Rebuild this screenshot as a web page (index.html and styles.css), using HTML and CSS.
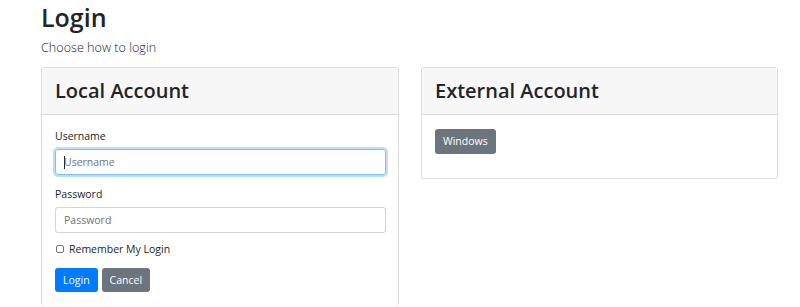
FILE: index.html
```html
<!DOCTYPE html>
<html lang="en">
<head>
<meta charset="utf-8">
<title>Login</title>
<link rel="stylesheet" href="styles.css">
</head>
<body>
<div class="page">
  <div class="lead">
    <h1 class="title">Login</h1>
    <p class="subtitle">Choose how to login</p>
  </div>
  <div class="row">
    <div class="card card-local">
      <div class="card-header"><h2 class="card-title">Local Account</h2></div>
      <div class="card-body">
        <div class="form-group">
          <label class="label" for="u">Username</label>
          <div class="input input-focus"><span class="caret"></span><span class="placeholder">Username</span></div>
        </div>
        <div class="form-group">
          <label class="label" for="p">Password</label>
          <div class="input"><span class="placeholder">Password</span></div>
        </div>
        <div class="check-row">
          <span class="checkbox"></span>
          <span class="check-label">Remember My Login</span>
        </div>
        <div class="buttons">
          <button class="btn btn-primary">Login</button>
          <button class="btn btn-secondary">Cancel</button>
        </div>
      </div>
    </div>
    <div class="card card-external">
      <div class="card-header"><h2 class="card-title">External Account</h2></div>
      <div class="card-body">
        <div class="list-inline">
          <button class="btn btn-secondary">Windows</button>
        </div>
      </div>
    </div>
  </div>
</div>
</body>
</html>
```
FILE: styles.css
```css
html, body {
  margin: 0;
  padding: 0;
  background: #fff;
  color: #212529;
  font-family: "Open Sans", "Noto Sans", sans-serif;
}
.page {
  padding: 0 22px 0 41px;
}
.lead {
  display: flex;
  flex-direction: column;
}
.title {
  margin: 0;
  font-size: 25px;
  font-weight: 600;
  line-height: 34px;
  height: 34px;
}
.subtitle {
  margin: 4px 0 0 0;
  font-size: 12.6px;
  font-weight: 300;
  line-height: 19px;
  color: #212529;
}
.row {
  display: flex;
  gap: 22px;
  margin-top: 10px;
  align-items: flex-start;
}
.card {
  border: 1px solid rgba(0,0,0,.125);
  border-radius: 3px;
  box-sizing: border-box;
  background: #fff;
}
.card-local {
  width: 358px;
  border-bottom: none;
}
.card-external {
  width: 357px;
}
.card-header {
  background: #f7f7f7;
  border-bottom: 1px solid rgba(0,0,0,.125);
  height: 46px;
  padding: 0 13px;
  display: flex;
  align-items: center;
}
.card-title {
  margin: 0;
  font-size: 20px;
  font-weight: 600;
  line-height: 26px;
}
.card-body {
  padding: 13px 12px 14px 13px;
}
.form-group {
  display: flex;
  flex-direction: column;
  margin-bottom: 11px;
}
.label {
  font-size: 10.5px;
  line-height: 16px;
  margin-bottom: 5px;
}
.input {
  height: 26px;
  box-sizing: border-box;
  border: 1px solid #ced4da;
  border-radius: 3px;
  display: flex;
  align-items: center;
  padding: 0 8px;
  font-size: 10.5px;
}
.input-focus {
  border-color: #80bdff;
  box-shadow: 0 0 0 2px rgba(0,123,255,.25);
}
.caret {
  width: 1px;
  height: 13px;
  background: #212529;
  margin-right: -1px;
}
.placeholder {
  color: #6c757d;
}
.check-row {
  display: flex;
  align-items: center;
  gap: 5px;
  height: 14px;
  margin-top: -2px;
  margin-bottom: 12px;
}
.checkbox {
  width: 6px;
  height: 6px;
  margin-left: 1px;
  border: 1px solid #767676;
  border-radius: 2px;
  background: #fff;
}
.check-label {
  font-size: 10.5px;
}
.buttons {
  display: flex;
  gap: 4px;
}
.btn {
  height: 24px;
  border: none;
  border-radius: 3px;
  color: #fff;
  font-family: inherit;
  font-size: 10.5px;
  padding: 0 8px;
  line-height: 24px;
}
.btn-primary { background: #007bff; }
.btn-secondary { background: #6c757d; }
.list-inline {
  margin-bottom: 10px;
}
.list-inline .btn {
  height: 25px;
}
```
